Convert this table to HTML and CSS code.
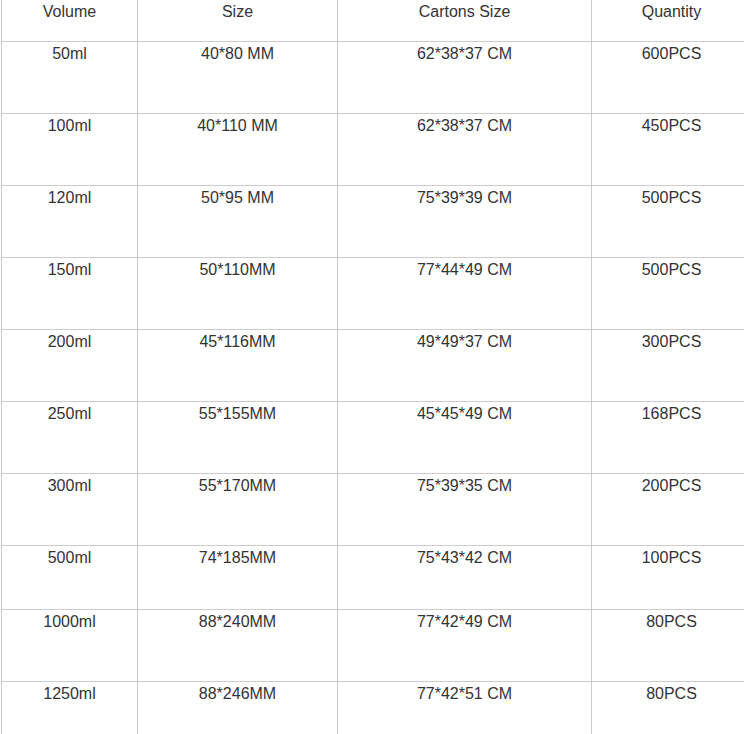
FILE: index.html
```html
<!DOCTYPE html>
<html lang="en">
<head>
<meta charset="utf-8">
<title>Bottle sizes</title>
<link rel="stylesheet" href="styles.css">
</head>
<body>
<div class="spec-table">
  <div class="row head">
    <div class="cell">Volume</div>
    <div class="cell">Size</div>
    <div class="cell">Cartons Size</div>
    <div class="cell">Quantity</div>
  </div>
  <div class="row">
    <div class="cell">50ml</div>
    <div class="cell">40*80 MM</div>
    <div class="cell">62*38*37 CM</div>
    <div class="cell">600PCS</div>
  </div>
  <div class="row">
    <div class="cell">100ml</div>
    <div class="cell">40*110 MM</div>
    <div class="cell">62*38*37 CM</div>
    <div class="cell">450PCS</div>
  </div>
  <div class="row">
    <div class="cell">120ml</div>
    <div class="cell">50*95 MM</div>
    <div class="cell">75*39*39 CM</div>
    <div class="cell">500PCS</div>
  </div>
  <div class="row">
    <div class="cell">150ml</div>
    <div class="cell">50*110MM</div>
    <div class="cell">77*44*49 CM</div>
    <div class="cell">500PCS</div>
  </div>
  <div class="row">
    <div class="cell">200ml</div>
    <div class="cell">45*116MM</div>
    <div class="cell">49*49*37 CM</div>
    <div class="cell">300PCS</div>
  </div>
  <div class="row">
    <div class="cell">250ml</div>
    <div class="cell">55*155MM</div>
    <div class="cell">45*45*49 CM</div>
    <div class="cell">168PCS</div>
  </div>
  <div class="row">
    <div class="cell">300ml</div>
    <div class="cell">55*170MM</div>
    <div class="cell">75*39*35 CM</div>
    <div class="cell">200PCS</div>
  </div>
  <div class="row short">
    <div class="cell">500ml</div>
    <div class="cell">74*185MM</div>
    <div class="cell">75*43*42 CM</div>
    <div class="cell">100PCS</div>
  </div>
  <div class="row">
    <div class="cell">1000ml</div>
    <div class="cell">88*240MM</div>
    <div class="cell">77*42*49 CM</div>
    <div class="cell">80PCS</div>
  </div>
  <div class="row">
    <div class="cell">1250ml</div>
    <div class="cell">88*246MM</div>
    <div class="cell">77*42*51 CM</div>
    <div class="cell">80PCS</div>
  </div>
</div>
</body>
</html>
```
FILE: styles.css
```css
html, body {
  margin: 0;
  padding: 0;
  background: #ffffff;
  overflow: hidden;
}

body {
  font-family: "Liberation Sans", Arial, sans-serif;
  font-size: 16px;
  color: #333333;
}

.spec-table {
  margin-left: 1px;
  width: 742px;
  border-left: 1px solid #cccccc;
}

.row {
  display: grid;
  grid-template-columns: 136px 200px 254px 151px;
  height: 72px;
  box-sizing: border-box;
  border-bottom: 1px solid #cccccc;
}

.row.head {
  height: 42px;
}

.row.short {
  height: 64px;
}

.cell {
  box-sizing: border-box;
  text-align: center;
  padding-top: 3px;
  border-right: 1px solid #cccccc;
  white-space: nowrap;
}

.cell:last-child {
  border-right: none;
  padding-left: 8px;
}

.row.head .cell {
  padding-top: 3px;
}
```
